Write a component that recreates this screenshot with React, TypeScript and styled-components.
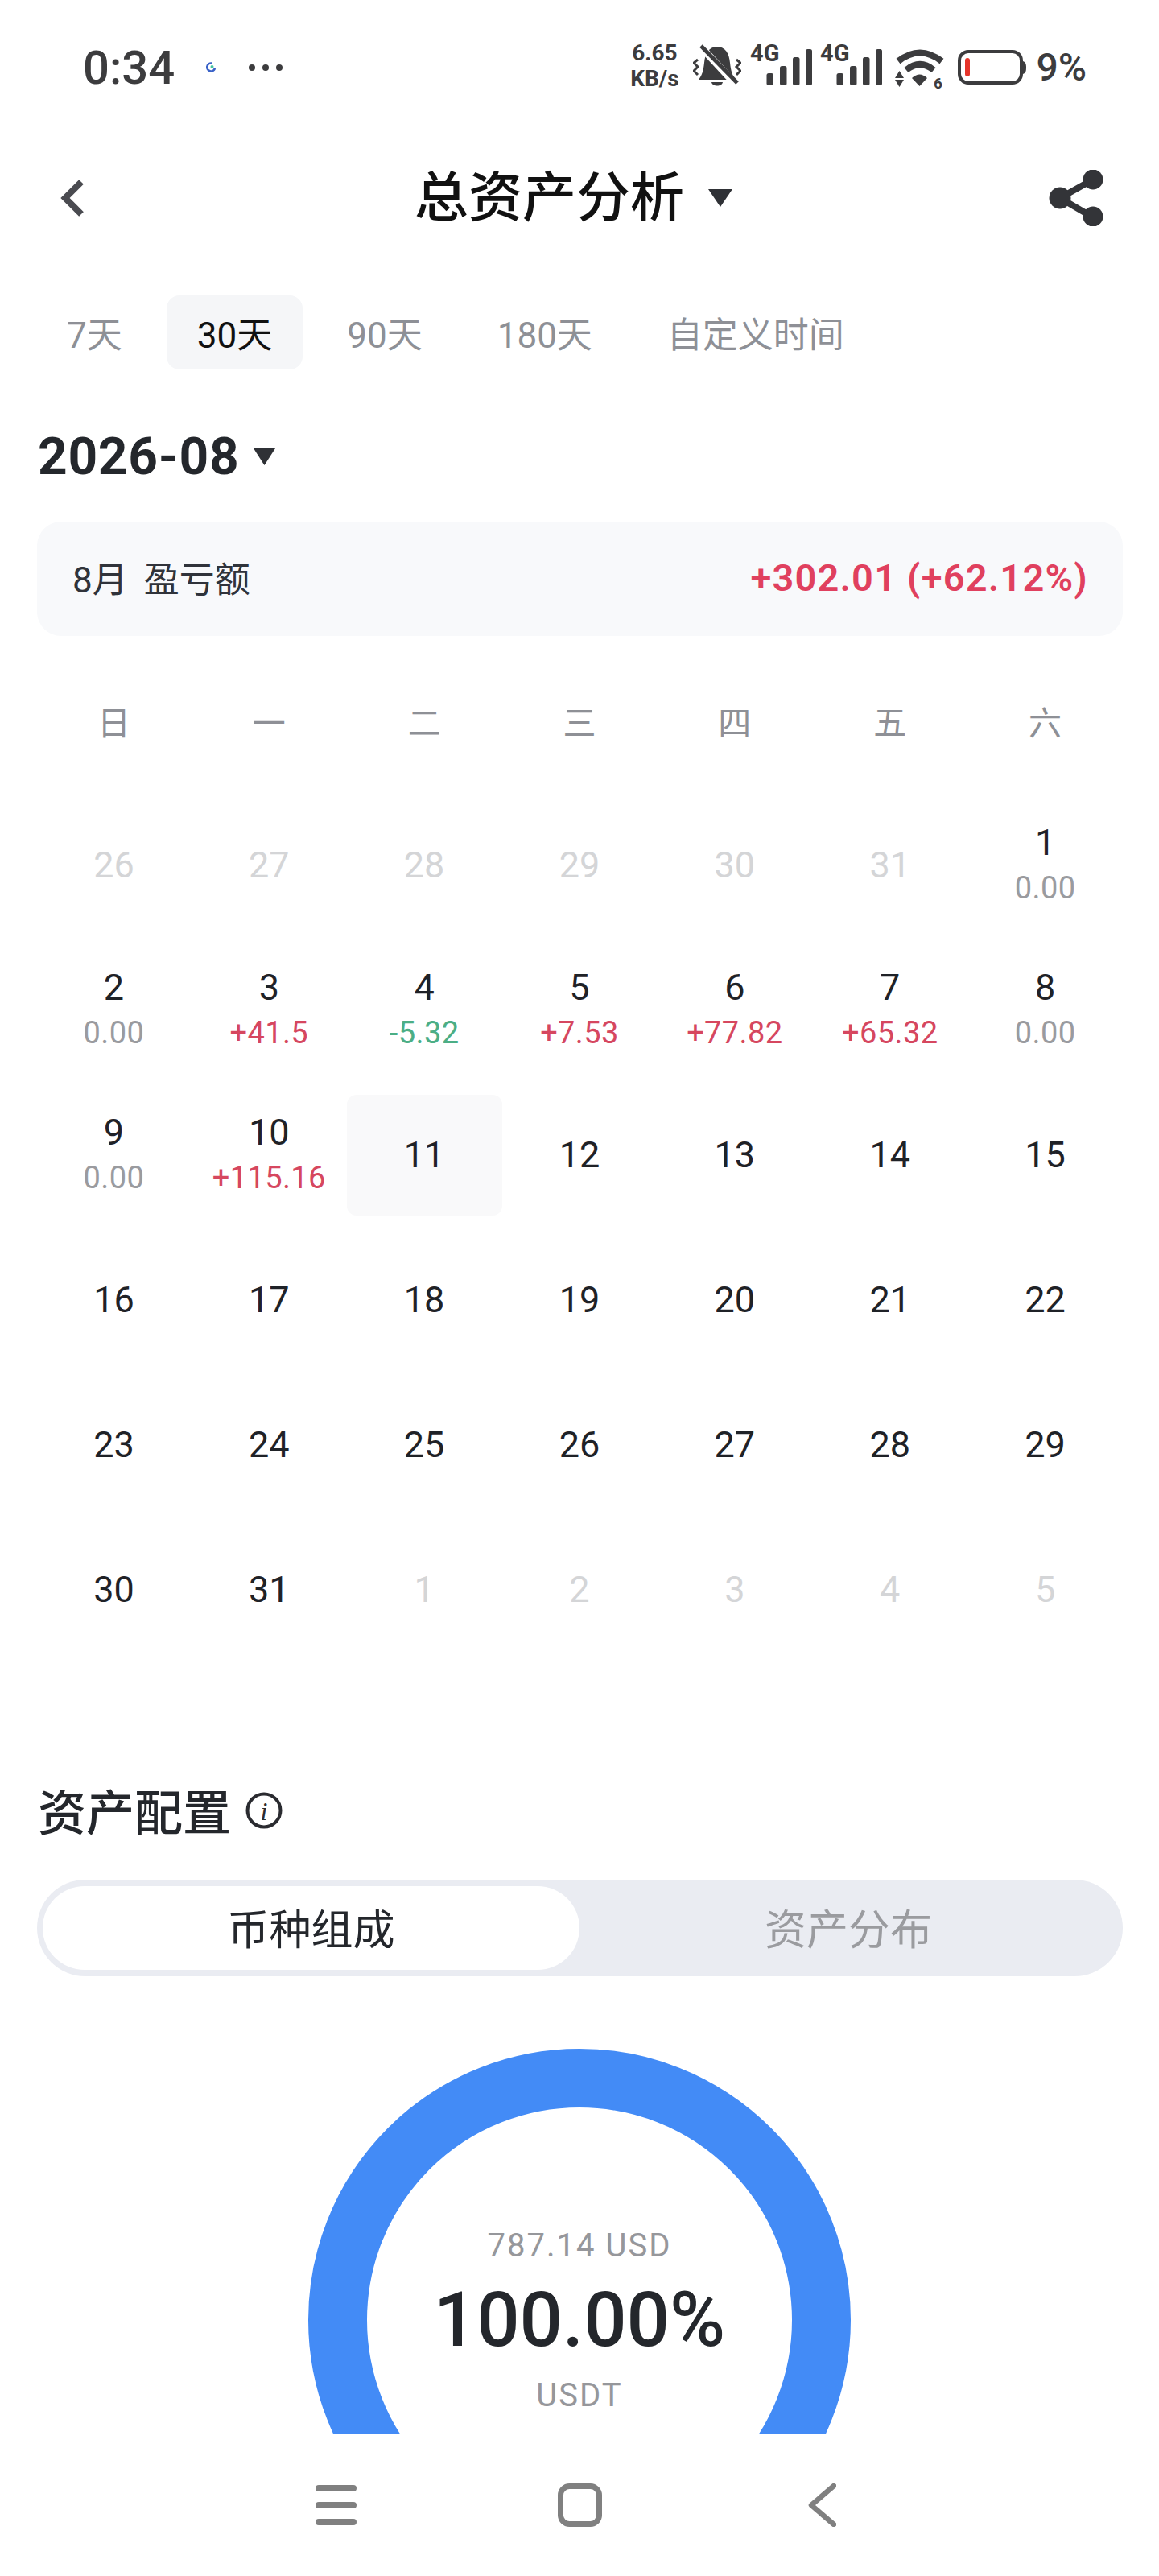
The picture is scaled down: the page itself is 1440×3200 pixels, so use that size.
import React from "react"
import styled, { createGlobalStyle } from "styled-components"

const FONT = `Roboto, "Noto Sans CJK SC", sans-serif`

const Global = createGlobalStyle`
  html, body { margin: 0; padding: 0; background: #fff; }
  * { box-sizing: border-box; }
  body { font-family: ${FONT}; }
`

const Page = styled.div`
  width: 1440px;
  height: 3200px;
  background: #fff;
  display: flex;
  flex-direction: column;
  overflow: hidden;
`

const Main = styled.main`
  height: 3023px;
  flex-shrink: 0;
  overflow: hidden;
`

/* status bar */
const StatusBar = styled.div`
  height: 168px;
  padding: 0 90px 0 103px;
  display: flex;
  align-items: center;
  color: #3c3c3e;
`
const Time = styled.span`
  font-size: 58px;
  font-weight: 500;
  line-height: 1;
`
const Loader = styled.svg`
  margin-left: 39px;
`
const Dots = styled.div`
  margin-left: 41px;
  display: flex;
  gap: 9px;
`
const Dot = styled.i`
  width: 8px;
  height: 8px;
  border-radius: 50%;
  background: #3c3c3e;
`
const StatusRight = styled.div`
  margin-left: auto;
  display: flex;
  align-items: center;
`
const Speed = styled.div`
  width: 62px;
  margin-bottom: 4px;
  font-size: 28px;
  font-weight: 700;
  line-height: 32px;
  text-align: center;
`
const StatusIcon = styled.svg<{ $ml: number }>`
  display: block;
  margin-left: ${p => p.$ml}px;
  fill: #3c3c3e;
`
const Percent = styled.span`
  margin-left: 12px;
  font-size: 48px;
  font-weight: 500;
  line-height: 60px;
`

/* title row */
const NavRow = styled.header`
  height: 154px;
  padding: 2px 69px 0 75px;
  display: grid;
  grid-template-columns: 440px auto 1fr;
  align-items: center;
`
const TitleGroup = styled.div`
  display: flex;
  align-items: center;
  gap: 30px;
`
const Title = styled.h1`
  margin: 0;
  font-size: 67px;
  font-weight: 500;
  line-height: 1;
  color: #111;
`
const ShareIcon = styled.svg`
  justify-self: end;
`

/* range tabs */
const Tabs = styled.div`
  margin-top: 45px;
  padding-left: 45px;
  display: flex;
  gap: 17px;
`
const Tab = styled.div<{ $active?: boolean }>`
  height: 92px;
  padding: 0 38px;
  display: flex;
  align-items: center;
  border-radius: 16px;
  font-size: 44px;
  color: ${p => (p.$active ? "#111" : "#8e9096")};
  background: ${p => (p.$active ? "#f5f6f8" : "transparent")};
`

const MonthRow = styled.div`
  margin-top: 61px;
  height: 94px;
  padding-left: 47px;
  display: flex;
  align-items: center;
  gap: 18px;
`
const Month = styled.span`
  font-size: 64px;
  font-weight: 700;
  letter-spacing: 0.7px;
  color: #24272c;
`

const Summary = styled.div`
  margin: 34px 45px 0 46px;
  height: 142px;
  padding: 0 43px 4px 44px;
  display: flex;
  align-items: center;
  justify-content: space-between;
  background: #f8f9fb;
  border-radius: 30px;
`
const SummaryLabel = styled.span`
  font-size: 44px;
  word-spacing: 9px;
  color: #30333a;
`
const SummaryValue = styled.span`
  font-size: 47px;
  font-weight: 600;
  letter-spacing: 1.2px;
  color: #e0405e;
`

/* calendar */
const Calendar = styled.div`
  margin: 0 45px;
  display: grid;
  grid-template-columns: repeat(7, 1fr);
`
const WeekRow = styled(Calendar)`
  margin-top: 75px;
  height: 60px;
  align-items: center;
`
const WeekDay = styled.div`
  text-align: center;
  font-size: 41px;
  color: #8e9096;
`
const DayGrid = styled(Calendar)`
  margin-top: 75px;
  grid-auto-rows: 150px;
  row-gap: 30px;
`
const DayCell = styled.div<{ $today?: boolean }>`
  display: flex;
  flex-direction: column;
  align-items: center;
  justify-content: center;
  border-radius: 12px;
  background: ${p => (p.$today ? "#f9f9fa" : "transparent")};
`
const DayNum = styled.span<{ $muted?: boolean }>`
  font-size: 45px;
  font-weight: 400;
  line-height: 56px;
  color: ${p => (p.$muted ? "#d4d5d7" : "#1f2227")};
`
const DayPnl = styled.span<{ $tone: "up" | "down" | "flat" }>`
  font-size: 38px;
  line-height: 56px;
  letter-spacing: 0.4px;
  color: ${p => ({ up: "#d6475f", down: "#4cae85", flat: "#9a9b9f" })[p.$tone]};
`

/* allocation */
const SectionHead = styled.div`
  margin-top: 157px;
  height: 80px;
  padding-left: 47px;
  display: flex;
  align-items: center;
  gap: 18px;
`
const SectionTitle = styled.h2`
  margin: 0;
  font-size: 60px;
  font-weight: 500;
  color: #24272c;
`
const InfoIcon = styled.svg`
  margin-top: 4px;
`
const Segment = styled.div`
  margin: 48px 45px 0 46px;
  height: 120px;
  padding: 8px 7px;
  display: flex;
  background: #eaecf2;
  border-radius: 60px;
`
const SegmentOn = styled.div`
  width: 667px;
  padding-bottom: 3px;
  display: flex;
  align-items: center;
  justify-content: center;
  background: #fff;
  border-radius: 52px;
  font-size: 52px;
  color: #24272c;
`
const SegmentOff = styled.div`
  flex: 1;
  padding-bottom: 3px;
  display: flex;
  align-items: center;
  justify-content: center;
  font-size: 52px;
  color: #9a9b9f;
`
const Chart = styled.div`
  position: relative;
  width: 674px;
  height: 674px;
  margin: 90px auto 0 383px;
`
const ChartText = styled.div`
  position: absolute;
  left: 0;
  right: 0;
  top: 219px;
  display: flex;
  flex-direction: column;
  align-items: center;
`
const ChartSub = styled.span`
  font-size: 40px;
  line-height: 52px;
  letter-spacing: 2px;
  color: #96979b;
`
const ChartMain = styled.span`
  margin: 11px 0 13px;
  font-size: 94px;
  font-weight: 500;
  line-height: 110px;
  color: #24272c;
`

/* system nav */
const SystemNav = styled.nav`
  height: 177px;
  padding: 0 401px 0 392px;
  display: flex;
  align-items: center;
  justify-content: space-between;
`

const weekDays = ["日", "一", "二", "三", "四", "五", "六"]

type Day = { n: number; muted?: boolean; pnl?: string; tone?: "up" | "down" | "flat" }

const days: Day[] = [
  ...[26, 27, 28, 29, 30, 31].map(n => ({ n, muted: true })),
  { n: 1, pnl: "0.00", tone: "flat" },
  { n: 2, pnl: "0.00", tone: "flat" },
  { n: 3, pnl: "+41.5", tone: "up" },
  { n: 4, pnl: "-5.32", tone: "down" },
  { n: 5, pnl: "+7.53", tone: "up" },
  { n: 6, pnl: "+77.82", tone: "up" },
  { n: 7, pnl: "+65.32", tone: "up" },
  { n: 8, pnl: "0.00", tone: "flat" },
  { n: 9, pnl: "0.00", tone: "flat" },
  { n: 10, pnl: "+115.16", tone: "up" },
  ...Array.from({ length: 21 }, (_, i) => ({ n: i + 11 })),
  ...[1, 2, 3, 4, 5].map(n => ({ n, muted: true })),
]

const Signal = ({ ml }: { ml: number }) => (
  <StatusIcon $ml={ml} width="77" height="72" viewBox="0 0 77 72">
    <text x="0" y="28" fontFamily="Roboto, sans-serif" fontSize="29" fontWeight="700">4G</text>
    <rect x="20.5" y="43" width="8.5" height="15" rx="2.5" />
    <rect x="37" y="34" width="8.5" height="24" rx="2.5" />
    <rect x="53" y="23" width="8.5" height="35" rx="2.5" />
    <rect x="69" y="13" width="8" height="45" rx="2.5" />
  </StatusIcon>
)

const Caret = ({ w, h }: { w: number; h: number }) => (
  <svg width={w} height={h} viewBox="0 0 10 8" preserveAspectRatio="none" fill="#2f3136">
    <path d="M0 0H10L5 8Z" />
  </svg>
)

export default function App() {
  return (
    <Page>
      <Global />
      <Main>
        <StatusBar>
          <Time>0:34</Time>
          <Loader width="12" height="14" viewBox="0 0 12 14">
            <path d="M7 1.5A5 5 0 1 0 11 8" fill="none" stroke="#3a62c8" strokeWidth="2.6" />
            <circle cx="7.5" cy="6" r="2" fill="#45c4a0" />
          </Loader>
          <Dots>
            <Dot />
            <Dot />
            <Dot />
          </Dots>
          <StatusRight>
            <Speed>
              6.65
              <br />
              KB/s
            </Speed>
            <StatusIcon $ml={17} width="60" height="60" viewBox="0 0 60 60">
              <path d="M30 4C40 4 45 12 46 24C47 34 49 40 53 45H7C11 40 13 34 14 24C15 12 20 4 30 4Z" />
              <path d="M23 48H37C36 54 24 54 23 48Z" />
              <path d="M8 2L56 54" stroke="#fff" strokeWidth="9" />
              <path d="M10 3L55 49" stroke="#3c3c3e" strokeWidth="5" />
              <path d="M6 20L1 24L6 29L1 34L6 39" fill="none" stroke="#3c3c3e" strokeWidth="3" />
              <path d="M54 20L59 24L54 29L59 34L54 39" fill="none" stroke="#3c3c3e" strokeWidth="3" />
            </StatusIcon>
            <Signal ml={11} />
            <Signal ml={10} />
            <StatusIcon $ml={16} width="62" height="60" viewBox="0 0 62 60">
              <path d="M4 22Q31 1 58 22" fill="none" stroke="#3c3c3e" strokeWidth="8" />
              <path d="M14 33Q31 19 48 33" fill="none" stroke="#3c3c3e" strokeWidth="8" />
              <path d="M21 43Q30.5 34 40 43L30.5 53Z" />
              <path d="M5.5 34L11 43H0Z" />
              <path d="M0 45H11L5.5 54Z" />
              <text x="48" y="56" fontFamily="Roboto, sans-serif" fontSize="19" fontWeight="700">6</text>
            </StatusIcon>
            <StatusIcon $ml={16} width="85" height="60" viewBox="0 0 85 60">
              <rect x="2" y="10" width="77" height="39" rx="11" fill="none" stroke="#3c3c3e" strokeWidth="4" />
              <path d="M81 22C84 23 85 25 85 30C85 35 84 37 81 38Z" />
              <rect x="9" y="18" width="6" height="23" rx="3" fill="#e6352b" />
            </StatusIcon>
            <Percent>9%</Percent>
          </StatusRight>
        </StatusBar>

        <NavRow>
          <svg width="30" height="48" viewBox="0 0 30 48" fill="none">
            <path d="M26 4L6 24L26 44" stroke="#4a4b50" strokeWidth="8" />
          </svg>
          <TitleGroup>
            <Title>总资产分析</Title>
            <Caret w={30} h={22} />
          </TitleGroup>
          <ShareIcon width="68" height="70" viewBox="0 0 68 70">
            <path d="M55 12L14 35L55 59" fill="none" stroke="#333438" strokeWidth="8" />
            <circle cx="55" cy="12" r="12.5" fill="#333438" />
            <circle cx="14" cy="35" r="13.5" fill="#333438" />
            <circle cx="55" cy="58" r="12.5" fill="#333438" />
          </ShareIcon>
        </NavRow>

        <Tabs>
          <Tab>7天</Tab>
          <Tab $active>30天</Tab>
          <Tab>90天</Tab>
          <Tab>180天</Tab>
          <Tab>自定义时间</Tab>
        </Tabs>

        <MonthRow>
          <Month>2026-08</Month>
          <Caret w={27} h={21} />
        </MonthRow>

        <Summary>
          <SummaryLabel>8月 盈亏额</SummaryLabel>
          <SummaryValue>+302.01 (+62.12%)</SummaryValue>
        </Summary>

        <WeekRow>
          {weekDays.map(d => (
            <WeekDay key={d}>{d}</WeekDay>
          ))}
        </WeekRow>

        <DayGrid>
          {days.map((d, i) => (
            <DayCell key={i} $today={!d.muted && d.n === 11}>
              <DayNum $muted={d.muted}>{d.n}</DayNum>
              {d.pnl && <DayPnl $tone={d.tone ?? "flat"}>{d.pnl}</DayPnl>}
            </DayCell>
          ))}
        </DayGrid>

        <SectionHead>
          <SectionTitle>资产配置</SectionTitle>
          <InfoIcon width="46" height="46" viewBox="0 0 46 46">
            <circle cx="23" cy="23" r="20.5" fill="none" stroke="#2a2b30" strokeWidth="4" />
            <text x="23" y="35" textAnchor="middle" fontFamily="Liberation Serif, serif" fontStyle="italic" fontSize="32" fill="#2a2b30">i</text>
          </InfoIcon>
        </SectionHead>

        <Segment>
          <SegmentOn>币种组成</SegmentOn>
          <SegmentOff>资产分布</SegmentOff>
        </Segment>

        <Chart>
          <svg width="674" height="674" viewBox="0 0 674 674">
            <circle cx="337" cy="337" r="300.5" fill="none" stroke="#438bf6" strokeWidth="73" />
          </svg>
          <ChartText>
            <ChartSub>787.14 USD</ChartSub>
            <ChartMain>100.00%</ChartMain>
            <ChartSub>USDT</ChartSub>
          </ChartText>
        </Chart>
      </Main>

      <SystemNav>
        <svg width="51" height="50" viewBox="0 0 51 50" fill="#808080">
          <rect x="0" y="0" width="51" height="8" rx="4" />
          <rect x="0" y="21" width="51" height="8" rx="4" />
          <rect x="0" y="42" width="51" height="8" rx="4" />
        </svg>
        <svg width="61" height="54" viewBox="0 0 61 54" fill="none">
          <rect x="3.5" y="3.5" width="48" height="47" rx="11" stroke="#808080" strokeWidth="7" />
        </svg>
        <svg width="35" height="54" viewBox="0 0 35 54" fill="none">
          <path d="M32 3L4 27L32 51" stroke="#808080" strokeWidth="6.5" strokeLinecap="round" strokeLinejoin="round" />
        </svg>
      </SystemNav>
    </Page>
  )
}
